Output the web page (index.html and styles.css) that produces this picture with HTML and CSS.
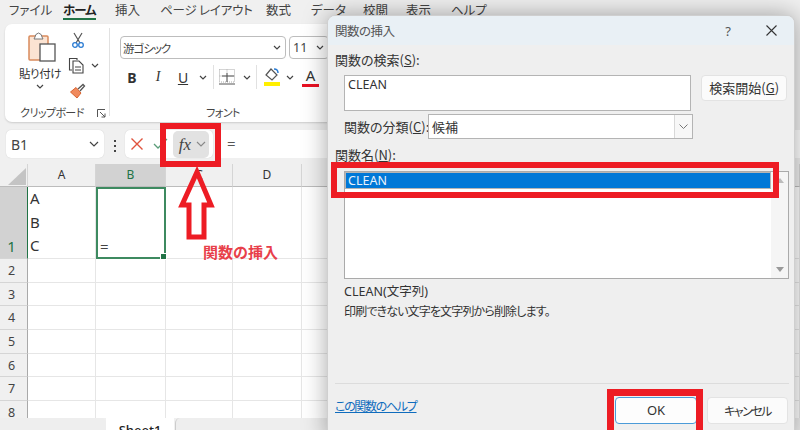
FILE: index.html
```html
<!DOCTYPE html>
<html lang="ja">
<head>
	<meta charset="UTF-8">
	<title>関数の挿入</title>
	<link rel="stylesheet" href="styles.css">
</head>
<body>
	<div class="app">
		<ul class="menu">
			<li class="m1">ファイル</li>
			<li class="m2 cur">ホーム</li>
			<li class="m3">挿入</li>
			<li class="m4">ページ レイアウト</li>
			<li class="m5">数式</li>
			<li class="m6">データ</li>
			<li class="m7">校閲</li>
			<li class="m8">表示</li>
			<li>ヘルプ</li>
		</ul>

		<div class="ribbon">
			<div class="group clip">
				<div class="clip_body">
					<div class="paste">
						<svg width="30" height="30" viewBox="0 0 30 30">
							<rect x="2" y="4" width="19" height="24" rx="1" fill="#fbe3d2" stroke="#d98a5c" stroke-width="1.5"/>
							<path d="M8 5 Q8 2 11.500 1 Q15 2 15 5 L16 7 H7 Z" fill="#fff" stroke="#777"/>
							<rect x="13" y="12" width="15" height="17" fill="#fff" stroke="#555" stroke-width="1.300"/>
						</svg>
						<span>貼り付け</span>
						<svg class="chev" width="8" height="5" viewBox="0 0 8 5"><path d="M1 1 L4 4 L7 1" fill="none" stroke="#444" stroke-width="1.200"/></svg>
					</div>
					<div class="clip_tools">
						<svg width="14" height="17" viewBox="0 0 14 17">
							<path d="M3 1 L9 11 M11 1 L5 11" fill="none" stroke="#555" stroke-width="1.200"/>
							<circle cx="4" cy="13" r="2.300" fill="none" stroke="#2b7cd3" stroke-width="1.300"/>
							<circle cx="10" cy="13" r="2.300" fill="none" stroke="#2b7cd3" stroke-width="1.300"/>
						</svg>
						<div class="copy_row">
							<svg width="17" height="17" viewBox="0 0 17 17">
								<path d="M4 13 H1.500 V1.500 H9 V3" fill="none" stroke="#444" stroke-width="1.100"/>
								<path d="M5 4 H11 L15 8 V16 H5 Z M7 10 H13 M7 13 H13" fill="#fff" stroke="#444" stroke-width="1.100"/>
							</svg>
							<svg class="chev" width="8" height="5" viewBox="0 0 8 5"><path d="M1 1 L4 4 L7 1" fill="none" stroke="#444" stroke-width="1.200"/></svg>
						</div>
						<svg class="brush" width="17" height="17" viewBox="0 0 17 17">
							<path d="M9 6 L14 1.500 L15.500 3 L11 8" fill="none" stroke="#555" stroke-width="1.300"/>
							<path d="M7 4.500 L12 10 L8 15 L1.500 9 Z" fill="#f08a5d" stroke="#d9632f"/>
						</svg>
					</div>
				</div>
				<div class="group_name">クリップボード
					<svg class="launcher" width="9" height="9" viewBox="0 0 9 9"><path d="M.5 8 V.5 H8 M3 3 L8 8 M8 4.500 V8 H4.500" fill="none" stroke="#555"/></svg>
				</div>
			</div>
			<div class="group font_group">
				<div class="font_body">
					<div class="combo_row">
						<div class="combo font_name">游ゴシック
							<svg width="8" height="5" viewBox="0 0 8 5"><path d="M1 1 L4 4 L7 1" fill="none" stroke="#444" stroke-width="1.200"/></svg>
						</div>
						<div class="combo font_size">11
							<svg width="8" height="5" viewBox="0 0 8 5"><path d="M1 1 L4 4 L7 1" fill="none" stroke="#444" stroke-width="1.200"/></svg>
						</div>
					</div>
					<div class="tool_row">
						<b class="tool t_b">B</b>
						<i class="tool t_i">I</i>
						<u class="tool t_u">U</u>
						<svg class="chev c_u" width="8" height="5" viewBox="0 0 8 5"><path d="M1 1 L4 4 L7 1" fill="none" stroke="#444" stroke-width="1.200"/></svg>
						<span class="sep s1"></span>
						<svg class="t_border" width="16" height="16" viewBox="0 0 16 16">
							<path d="M.5 .5 H15.500 V13 H.5 Z M8 .5 V13 M.5 7 H15.500" fill="none" stroke="#aaa" stroke-dasharray="1 1"/>
							<path d="M8 4 V13 M3 7 H15 M0 15 H16" fill="none" stroke="#555" stroke-width="1"/>
						</svg>
						<svg class="chev c_b" width="8" height="5" viewBox="0 0 8 5"><path d="M1 1 L4 4 L7 1" fill="none" stroke="#444" stroke-width="1.200"/></svg>
						<span class="sep s2"></span>
						<svg class="t_fill" width="17" height="18" viewBox="0 0 17 18">
							<path d="M7 1 L13 7 L8 12 L2 7 Z" fill="#fff" stroke="#555" stroke-width="1.200"/>
							<path d="M10 1 Q14 1 14 5" fill="none" stroke="#2b7cd3" stroke-width="1.500"/>
							<rect y="14" width="16" height="4" fill="#ffef00"/>
						</svg>
						<svg class="chev c_f" width="8" height="5" viewBox="0 0 8 5"><path d="M1 1 L4 4 L7 1" fill="none" stroke="#444" stroke-width="1.200"/></svg>
						<span class="font_color">A</span>
						<svg class="chev c_a" width="8" height="5" viewBox="0 0 8 5"><path d="M1 1 L4 4 L7 1" fill="none" stroke="#444" stroke-width="1.200"/></svg>
					</div>
				</div>
				<div class="group_name font_label">フォント</div>
			</div>
		</div>

		<div class="formula">
			<div class="name_box">B1
				<svg width="10" height="6" viewBox="0 0 10 6"><path d="M1 1 L5 5 L9 1" fill="none" stroke="#444" stroke-width="1.200"/></svg>
			</div>
			<span class="dots"></span>
			<div class="fx_box">
				<svg width="14" height="14" viewBox="0 0 14 14"><path d="M1.500 1.500 L12.500 12.500 M12.500 1.500 L1.500 12.500" stroke="#e0533d" stroke-width="1.400"/></svg>
				<svg class="ok_mark" width="15" height="12" viewBox="0 0 15 12"><path d="M1 6 L5 10 L14 1" fill="none" stroke="#5a9c78" stroke-width="1.300"/></svg>
				<div class="fx_btn"><em>fx</em>
					<svg width="10" height="6" viewBox="0 0 10 6"><path d="M1 1 L5 5 L9 1" fill="none" stroke="#888" stroke-width="1.100"/></svg>
				</div>
			</div>
			<div class="formula_input">=</div>
		</div>

		<div class="sheet">
			<div class="corner"></div>
			<div class="col">A</div>
			<div class="col sel">B</div>
			<div class="col">C</div>
			<div class="col">D</div>
			<div class="col"></div>

			<div class="row sel big">1</div>
			<div class="cell big multi"><span>A</span><span>B</span><span>C</span></div>
			<div class="cell big active">=</div>
			<div class="cell big"></div>
			<div class="cell big"></div>
			<div class="cell big"></div>

			<div class="row">2</div><div class="cell"></div><div class="cell"></div><div class="cell"></div><div class="cell"></div><div class="cell"></div>
			<div class="row">3</div><div class="cell"></div><div class="cell"></div><div class="cell"></div><div class="cell"></div><div class="cell"></div>
			<div class="row">4</div><div class="cell"></div><div class="cell"></div><div class="cell"></div><div class="cell"></div><div class="cell"></div>
			<div class="row">5</div><div class="cell"></div><div class="cell"></div><div class="cell"></div><div class="cell"></div><div class="cell"></div>
			<div class="row">6</div><div class="cell"></div><div class="cell"></div><div class="cell"></div><div class="cell"></div><div class="cell"></div>
			<div class="row">7</div><div class="cell"></div><div class="cell"></div><div class="cell"></div><div class="cell"></div><div class="cell"></div>
			<div class="row">8</div><div class="cell"></div><div class="cell"></div><div class="cell"></div><div class="cell"></div><div class="cell"></div>
		</div>

		<div class="tabs">
			<div class="tab_nav"></div>
			<div class="tab">Sheet1</div>
			<div class="tab_rest"></div>
		</div>
	</div>

	<div class="dialog">
		<div class="dlg_title">
			<span>関数の挿入</span>
			<span class="help">?</span>
			<svg width="11" height="11" viewBox="0 0 11 11"><path d="M.5 .5 L10.500 10.500 M10.500 .5 L.5 10.500" stroke="#333" stroke-width="1.100"/></svg>
		</div>
		<div class="dlg_body">
			<div class="label">関数の検索(<u>S</u>):</div>
			<div class="search_row">
				<div class="search_input">CLEAN</div>
				<div class="btn search_btn">検索開始(<u>G</u>)</div>
			</div>
			<div class="cat_row">
				<span>関数の分類(<u>C</u>):</span>
				<div class="select">候補
					<span class="sel_arrow"><svg width="9" height="5" viewBox="0 0 9 5"><path d="M.5 .5 L4.500 4.500 L8.500 .5" fill="none" stroke="#777"/></svg></span>
				</div>
			</div>
			<div class="label list_label">関数名(<u>N</u>):</div>
			<div class="list">
				<div class="list_items"><div class="list_sel">CLEAN</div></div>
				<div class="scroll"><i class="up"></i><i class="down"></i></div>
			</div>
			<div class="func_sig">CLEAN(文字列)</div>
			<div class="func_desc">印刷できない文字を文字列から削除します。</div>
			<div class="dlg_foot">
				<a class="help_link">この関数のヘルプ</a>
				<div class="btn ok">OK</div>
				<div class="btn cancel">キャンセル</div>
			</div>
		</div>
	</div>

	<!-- annotations over the screenshot -->
	<div class="mark mark_fx"></div>
	<div class="mark mark_list"></div>
	<div class="mark mark_ok"></div>
	<svg class="arrow" width="40" height="76" viewBox="0 0 40 76">
		<path d="M20 5 L34 38 H27 V70 H12 V38 H5 Z" fill="none" stroke="#ed1c24" stroke-width="5"/>
	</svg>
	<div class="note">関数の挿入</div>
</body>
</html>
```

FILE: styles.css
```css
*{margin:0;padding:0;list-style:none;box-sizing:border-box;}
html,body{width:800px;height:430px;overflow:hidden;}
body{font-family:"Noto Sans CJK JP","Noto Sans",sans-serif;font-size:12px;color:#333;background:#f0f0f0;font-feature-settings:"palt";}
.app{width:800px;height:430px;overflow:hidden;display:flex;flex-direction:column;}

.menu{display:flex;height:24px;padding:1px 0 0 9px;font-size:12.500px;line-height:18px;color:#444;}
.menu li{white-space:nowrap;margin-right:19px;height:19px;}
.menu .cur{font-weight:bold;color:#222;border-bottom:2px solid #217346;letter-spacing:-1px;}
.m1{width:35px;}
.m2{width:33px;}
.m3{width:26px;}
.m4{width:87px;letter-spacing:-.2px;}
.m5{width:26px;}
.m6{width:33px;}
.m7{width:24px;}
.m8{width:26px;}

.ribbon{display:flex;margin-left:5px;width:330px;height:98px;background:#fff;border-radius:7px;box-shadow:0 1px 2px rgba(0,0,0,.15);padding:4px 0 0;}
.group{display:flex;flex-direction:column;}
.clip{width:107px;border-right:1px solid #e1e1e1;height:88px;}
.clip_body{display:flex;height:72px;padding:4px 0 0 12px;gap:7px;}
.paste{width:46px;display:flex;flex-direction:column;align-items:center;font-size:11.500px;color:#333;}
.paste svg:first-child{margin-left:4px;}
.paste span{margin-top:3px;line-height:16px;white-space:nowrap;letter-spacing:-.4px;}
.chev{flex:none;}
.paste .chev{margin-top:3px;}
.clip_tools{display:flex;flex-direction:column;gap:9px;margin-left:-1px;width:36px;align-items:flex-start;}
.clip_tools svg{margin-left:2px;}
.copy_row{display:flex;align-items:center;gap:4px;margin:-1px 0 0 -3px;}
.clip_tools .brush{margin-left:0;}
.group_name{position:relative;font-size:11px;line-height:16px;text-align:center;color:#444;padding-top:4px;padding-right:10px;letter-spacing:-.6px;}
.launcher{position:absolute;right:3px;top:9px;}

.font_group{flex:1;padding-left:10px;}
.font_body{height:72px;padding-top:8px;}
.combo_row{display:flex;gap:3px;}
.combo{height:23px;border:1px solid #bdbdbd;border-radius:4px;display:flex;align-items:center;justify-content:space-between;padding:0 4px 0 2px;font-size:11.500px;color:#444;}
.font_name{width:166px;letter-spacing:-1px;}
.font_size{width:40px;font-size:12.500px;padding-left:3px;font-family:"Noto Sans",sans-serif;}
.tool_row{display:flex;align-items:center;height:26px;margin-top:5px;}
.tool{font-family:"Noto Sans",sans-serif;font-size:14px;width:14px;text-align:center;color:#333;}
.t_b{margin-left:5px;}
.t_i{margin-left:12px;font-family:"Liberation Serif",serif;}
.t_u{margin-left:11px;}
.c_u{margin-left:9px;}
.sep{width:1px;height:24px;background:#e1e1e1;flex:none;}
.s1{margin-left:6px;}
.t_border{margin-left:5px;}
.c_b{margin-left:8px;}
.s2{margin-left:5px;}
.t_fill{margin-left:7px;}
.c_f{margin-left:5px;}
.font_color{width:17px;margin-left:8px;text-align:center;font-family:"Noto Sans",sans-serif;font-size:15px;line-height:17px;color:#333;border-bottom:3px solid #e81123;}
.c_a{margin-left:8px;}
.font_label{padding-right:0;width:206px;}

.formula{display:flex;align-items:flex-start;height:34px;margin-top:8px;padding-left:6px;}
.name_box{width:98px;height:28px;background:#fff;border-radius:5px;display:flex;align-items:center;justify-content:space-between;padding:0 5px;font-family:"Noto Sans",sans-serif;font-size:14px;color:#444;box-shadow:0 0 1px rgba(0,0,0,.2);}
.dots{width:2px;height:2px;background:#444;margin:15px 9px 0 10px;box-shadow:0 -5px #444,0 5px #444;}
.fx_box{width:88px;height:28px;background:#fff;border-radius:5px;display:flex;align-items:center;padding-left:5px;box-shadow:0 0 1px rgba(0,0,0,.2);}
.ok_mark{margin-left:9px;}
.fx_btn{width:36px;height:27px;background:#e2e2e2;border-radius:5px;margin-left:5px;display:flex;align-items:center;justify-content:center;gap:5px;padding-left:3px;flex:none;}
.fx_btn em{font-family:"Liberation Serif",serif;font-size:17px;color:#444;line-height:1;}
.formula_input{flex:1;height:28px;background:#fff;margin-left:4px;border-radius:5px 0 0 5px;padding-left:10px;line-height:26px;font-family:"Noto Sans",sans-serif;font-size:15px;color:#555;}

.sheet{display:grid;grid-template-columns:28px 68px 70px 67px 69px 498px;grid-template-rows:23px 72px repeat(7,23.700px);background:#fff;height:254px;overflow:hidden;font-family:"Noto Sans",sans-serif;}
.corner{background:#f0f0f0;border-right:1px solid #d5d5d5;border-bottom:1px solid #bcbcbc;}
.corner:after{content:"";display:block;width:0;height:0;border-style:solid;border-width:0 0 17px 18px;border-color:transparent transparent #c4c4c4 transparent;margin:4px 0 0 8px;}
.col{background:#f0f0f0;border-right:1px solid #d5d5d5;border-bottom:1px solid #bcbcbc;text-align:center;line-height:21px;font-size:12px;color:#333;}
.col.sel{background:#d2d2d2;color:#217346;}
.row{background:#f0f0f0;border-right:1px solid #a9a9a9;border-bottom:1px solid #d5d5d5;text-align:center;padding-right:4px;font-size:12.500px;line-height:23px;color:#444;}
.row.sel{background:#d2d2d2;color:#217346;border-right:1px solid #217346;display:flex;align-items:flex-end;justify-content:center;}
.cell{border-right:1px solid #e6e6e6;border-bottom:1px solid #e6e6e6;}
.big{font-size:15px;}
.multi{display:flex;flex-direction:column;padding-left:2px;line-height:23.500px;color:#333;}
.active{border:2px solid #3d8a60;position:relative;padding-left:2px;display:flex;align-items:flex-end;line-height:22px;color:#444;}
.active:after{content:"";position:absolute;right:-3px;bottom:-3px;width:5px;height:5px;background:#217346;border:1px solid #fff;}

.tabs{position:absolute;left:0;top:418px;width:800px;height:12px;display:flex;background:#f0f0f0;}
.tab_nav{width:106px;border-radius:0 5px 0 0;background:#eee;}
.tab{width:68px;background:#fff;text-align:center;font-family:"Noto Sans",sans-serif;font-size:13px;font-weight:500;color:#222;line-height:24px;overflow:hidden;}
.tab_rest{flex:1;border-left:1px solid #ccc;border-radius:5px 0 0 0;margin-left:1px;background:#eee;}

.dialog{position:absolute;left:327px;top:15px;width:468px;height:426px;background:#efefef;border-radius:8px;box-shadow:0 0 24px rgba(0,0,0,.35);border:1px solid #cfcfcf;font-size:13px;color:#333;}
.dlg_title{display:flex;align-items:center;height:29px;padding:0 17px 0 7px;background:#e9f0f5;border-radius:7px 7px 0 0;}
.dlg_title span:first-child{flex:1;color:#555;font-size:12.500px;letter-spacing:-.5px;}
.help{margin-right:35px;font-family:"Noto Sans",sans-serif;color:#555;}
.dlg_body{padding:6px 7px 0;position:relative;}
.label{line-height:18px;height:18px;white-space:nowrap;}
.search_row{display:flex;margin:6px 0 0 9px;gap:10px;}
.search_input{width:349px;height:36px;background:#fff;border:1px solid #b4b4b4;padding-left:3px;line-height:18px;font-family:"Noto Sans",sans-serif;font-size:12.500px;}
.btn{background:#fbfbfb;border:1px solid #e3e3e3;border-radius:4px;text-align:center;white-space:nowrap;}
.search_btn{width:86px;height:26px;line-height:24px;}
.cat_row{display:flex;align-items:center;margin:3px 0 0 9px;height:25px;gap:0;white-space:nowrap;}
.cat_row>span{width:84px;}
.select{width:265px;height:25px;background:#fff;border:1px solid #b4b4b4;padding-left:3px;line-height:23px;display:flex;justify-content:space-between;}
.sel_arrow{width:18px;background:#f7f7f7;border-left:1px solid #d8d8d8;display:flex;align-items:center;justify-content:center;}
.list_label{margin-top:7px;}
.list{display:flex;width:445px;height:108px;margin:7px 0 0 9px;background:#fff;border:1px solid #aaa;}
.list_items{flex:1;padding:1px;}
.list_sel{height:15px;background:#0078d7;outline:1px solid #b5b5b5;color:#e8f2fb;font-family:"Noto Sans",sans-serif;font-size:12.500px;line-height:15px;padding-left:2px;}
.scroll{width:17px;background:#f5f5f5;display:flex;flex-direction:column;justify-content:space-between;align-items:center;padding:6px 0;}
.scroll i{width:0;height:0;border-style:solid;border-width:0 4px 5px;border-color:transparent transparent #bbb;}
.scroll .down{border-width:5px 4px 0;border-color:#999 transparent transparent;}
.func_sig{margin:4px 0 0 9px;line-height:18px;font-family:"Noto Sans","Noto Sans CJK JP",sans-serif;font-size:12.500px;}
.func_desc{margin:1px 0 0 9px;line-height:18px;font-size:12px;letter-spacing:-.85px;}
.dlg_foot{display:flex;align-items:flex-start;margin-top:63px;border-top:1px solid #dcdcdc;padding-top:13px;width:454px;}
.help_link{color:#0f6cbd;text-decoration:underline;width:280px;line-height:18px;font-size:12px;letter-spacing:-1.300px;white-space:nowrap;}
.ok{width:82px;height:27px;line-height:25px;background:#fdfdfd;border:1px solid #4b9bd8;font-family:"Noto Sans",sans-serif;font-size:13px;margin-right:10px;}
.cancel{width:81px;height:27px;line-height:25px;font-size:12px;letter-spacing:-1.500px;}

.mark{position:absolute;border:6px solid #ed1c24;}
.mark_fx{left:160px;top:123px;width:61px;height:44px;}
.mark_list{left:331px;top:162px;width:448px;height:36px;}
.mark_ok{left:607px;top:389px;width:96px;height:50px;border-width:7px;}
.arrow{position:absolute;left:177px;top:167px;}
.note{position:absolute;left:203px;top:242px;font-size:15px;font-weight:bold;line-height:20px;color:#e8404a;font-feature-settings:normal;}
```
